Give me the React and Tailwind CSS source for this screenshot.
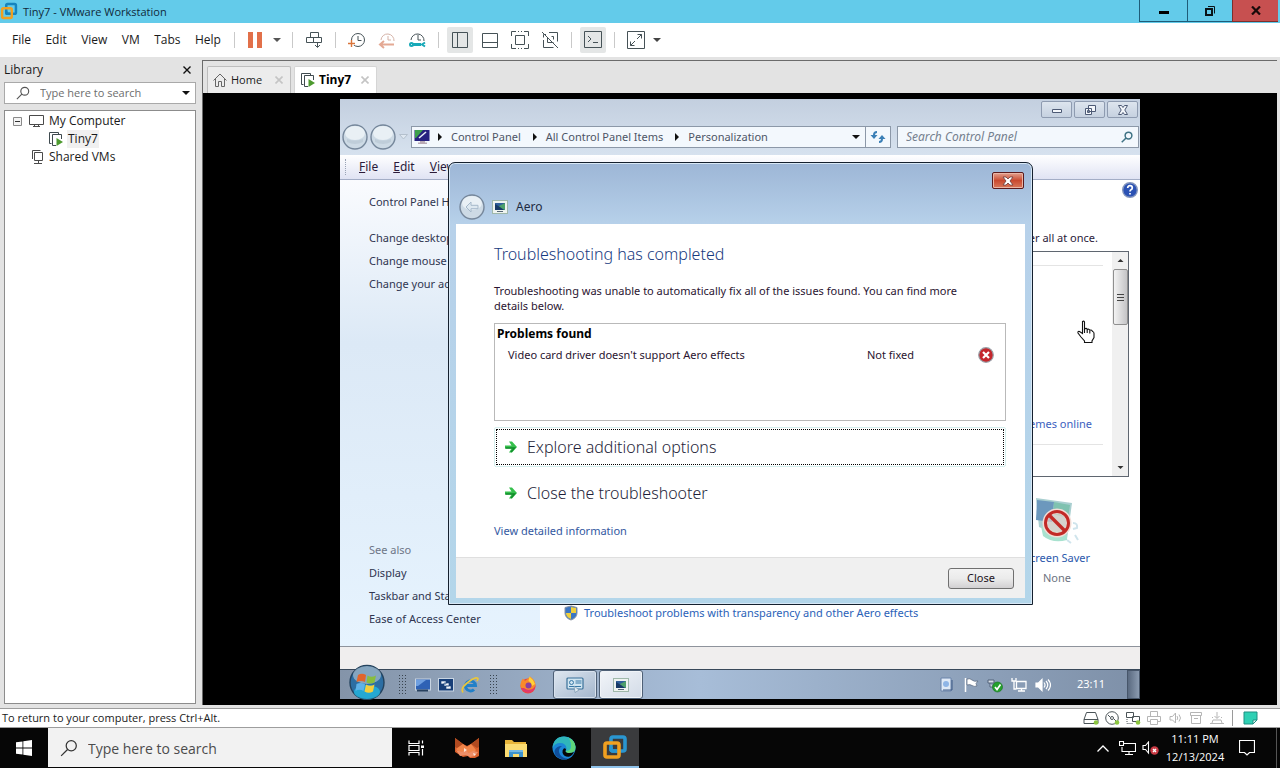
import React, { useState } from 'react';

const HOST_FONT = "font-['Open_Sans','Noto_Sans',sans-serif]";
const GUEST_FONT = "font-['Noto_Sans','Open_Sans',sans-serif]";

/* ---------- shared glyphs ---------- */

function Caret({ className = 'h-[4px] w-[8px]', fill = '#111' }) {
  return (
    <svg viewBox="0 0 8 4" className={className}>
      <path d="M0 0h8L4 4z" fill={fill} />
    </svg>
  );
}

function VmwareLogo({ className, back = '#1684bd', front = '#f0a020' }) {
  return (
    <svg viewBox="0 0 26 26" className={className} fill="none" strokeWidth="3.6">
      <rect x="9" y="3" width="14" height="14" rx="2" stroke={back} />
      <rect x="3" y="9" width="14" height="14" rx="2" stroke={front} />
      <path d="M9 13v2a2 2 0 0 0 2 2h4" stroke={back} />
    </svg>
  );
}

function VmPlayIcon() {
  return (
    <svg viewBox="0 0 16 16" className="h-4 w-4" fill="none" stroke="#3f4a4f">
      <path d="M3.5 12.5h-2v-11h9v2" />
      <path d="M8 14.500h-3.500v-11h9v4.500" />
      <path d="M8.500 7v8l6.500-4z" fill="#4d9a2f" stroke="none" />
    </svg>
  );
}

function MagnifierIcon({ className, stroke = '#555', width = 1.3 }) {
  return (
    <svg viewBox="0 0 16 16" className={className} fill="none" stroke={stroke} strokeWidth={width}>
      <circle cx="10" cy="6" r="4.500" />
      <path d="M6.700 9.300L1 15" />
    </svg>
  );
}

function AeroIcon() {
  return (
    <svg viewBox="0 0 16 14" className="h-[14px] w-4">
      <rect x="0.500" y="0.500" width="15" height="13" fill="#eef4f0" stroke="#9fb8aa" />
      <rect x="3" y="3" width="10" height="7" fill="#2f5f9a" />
      <path d="M13 3L5 7l8 3z" fill="#4da06a" />
      <path d="M3 4l5 3 4 3H3z" fill="#173a66" />
      <rect x="5" y="11" width="6" height="1" fill="#567" />
    </svg>
  );
}

/* ---------- host title bar, menu and toolbar ---------- */

function HostTitleBar() {
  return (
    <header className="flex h-[23px] shrink-0 items-start bg-[#63cbea] pr-[2px]">
      <VmwareLogo className="mt-[2px] h-[18px] w-[18px]" />
      <h1 className="ml-[5px] flex-1 text-[11px] leading-[23px] text-[#10293a]">
        Tiny7 - VMware Workstation
      </h1>
      <button aria-label="Minimize" className="flex h-[22px] w-12 items-center justify-center border-b border-l border-[#1f5c78]">
        <span className="mt-[3px] h-[3px] w-[10px] bg-black" />
      </button>
      <button aria-label="Restore" className="flex h-[22px] w-[45px] items-center justify-center border-b border-l border-[#1f5c78]">
        <svg viewBox="0 0 10 10" className="h-[10px] w-[10px]" fill="none" stroke="#0a1418">
          <rect x="1" y="3" width="6" height="6" strokeWidth="2" />
          <path d="M3 0.500h6.500v7" />
        </svg>
      </button>
      <button aria-label="Close" className="flex h-[22px] w-[46px] items-center justify-center border-b border-l border-[#7c2f2c] bg-[#c75050]">
        <svg viewBox="0 0 10 9" className="h-[9px] w-[10px]" stroke="#1b0a0a" strokeWidth="2.200">
          <path d="M1 0.500l8 8M9 0.500l-8 8" />
        </svg>
      </button>
    </header>
  );
}

const menus = ['File', 'Edit', 'View', 'VM', 'Tabs', 'Help'];

function Divider() {
  return <span className="mx-[6px] h-4 w-px bg-[#c9c9c9]" />;
}

function ToolButton({ label, active, children }) {
  return (
    <button
      aria-label={label}
      className="flex h-[26px] w-[30px] items-center justify-center"
    >
      <span className={`flex h-[26px] w-[26px] items-center justify-center rounded-[2px] ${active ? 'bg-[#e4e6e6]' : ''}`}>
        <svg viewBox="0 0 18 18" className="h-[18px] w-[18px]" fill="none" stroke="#465257">
          {children}
        </svg>
      </span>
    </button>
  );
}

function HostToolbar() {
  return (
    <div className="flex h-[34px] shrink-0 items-center bg-white">
      <nav className="flex w-[228px] shrink-0 justify-between pl-[12px] pr-[7px]">
        {menus.map((m) => (
          <button key={m} className="text-[12px] text-[#1a1a1a]">{m}</button>
        ))}
      </nav>
      <Divider />
      <button aria-label="Suspend" className="flex h-[26px] w-[27px] items-center justify-center gap-[4px]">
        <span className="h-4 w-[5px] bg-[#e2704a]" />
        <span className="h-4 w-[5px] bg-[#e2704a]" />
      </button>
      <button aria-label="Power options" className="flex w-[18px] justify-center"><Caret fill="#555" /></button>
      <Divider />
      <ToolButton label="Send Ctrl+Alt+Del">
        <path d="M5.500 1.500h8v5h-8zM1.500 6.500h7v5h-7zM8.500 6.500h8v5h-8zM12.500 11v5M10 14l2.500 2.500L15 14" />
      </ToolButton>
      <Divider />
      <ToolButton label="Take snapshot">
        <circle cx="10" cy="9" r="6.500" />
        <path d="M10 5v4.500h3.500" />
        <path d="M0 12.500h7M3.500 9v7" stroke="#fff" strokeWidth="3" />
        <path d="M0 12.500h7M3.500 9v7" stroke="#d9743a" strokeWidth="1.400" />
      </ToolButton>
      <ToolButton label="Revert snapshot">
        <path d="M3 9a6.500 6.500 0 1 1 13 1M10 5v4h3" stroke="#d5b3a8" />
        <path d="M2 13.500h14M6 10l-4 3.500L6 17" stroke="#e4a994" strokeWidth="2" />
      </ToolButton>
      <ToolButton label="Manage snapshots">
        <path d="M3 9a6.500 6.500 0 1 1 13 1M10 4v5h3" />
        <path d="M4 13.500h9" stroke="#18a9b8" strokeWidth="3" />
        <circle cx="3.500" cy="13.500" r="1.500" stroke="#18a9b8" strokeWidth="2" />
        <path d="M17 11.500l-3 2 3 2" stroke="#18a9b8" strokeWidth="2" />
      </ToolButton>
      <Divider />
      <ToolButton label="Show library" active>
        <path d="M1.500 1.500h15v15h-15zM6.500 1.500v15" />
      </ToolButton>
      <ToolButton label="Show thumbnail bar">
        <path d="M1.500 2.500h15v14h-15zM1.500 11.500h15" />
      </ToolButton>
      <ToolButton label="Full screen">
        <path d="M4.500 4.500h9v9h-9zM0.500 5V0.500H5M13 0.500h4.500V5M17.500 13v4.500H13M5 17.500H0.500V13M7 0.500h1M10 0.500h1M7 17.500h1M10 17.500h1" />
      </ToolButton>
      <ToolButton label="Unity mode">
        <path d="M5 3.500h-2.500v3M8 1.500h8.500v9M2.500 9v7.500h10M6.500 6.500v5h6M10.500 5.500h2v3M1 1l16 16" />
      </ToolButton>
      <Divider />
      <ToolButton label="Show console view" active>
        <path d="M0.500 0.500h17v16h-17zM4 5l3 3-3 3M9 11.500h5" />
      </ToolButton>
      <Divider />
      <ToolButton label="Stretch guest">
        <path d="M0.500 0.500h17v17h-17zM10 8l4.500-4.500M10.500 3.500h4v4M8 10l-4.500 4.500M3.500 10.500v4h4" />
      </ToolButton>
      <button aria-label="Stretch options" className="ml-[2px]"><Caret fill="#444" /></button>
    </div>
  );
}

/* ---------- library panel ---------- */

function Library() {
  const [query, setQuery] = useState('');

  return (
    <aside className="flex w-[202px] shrink-0 flex-col pl-1 pr-[6px] pt-px">
      <div className="flex h-6 items-center justify-between pr-[5px]">
        <h2 className="text-[12px] text-[#1a1a1a]">Library</h2>
        <button aria-label="Close library">
          <svg viewBox="0 0 8 8" className="h-2 w-2" stroke="#111" strokeWidth="1.400">
            <path d="M0.500 0.500l7 7M7.500 0.500l-7 7" />
          </svg>
        </button>
      </div>
      <div className="flex h-[22px] items-center border border-[#a9a9a9] bg-white pl-[11px] pr-[5px]">
        <MagnifierIcon className="h-[14px] w-[14px] shrink-0" />
        <input
          aria-label="Library search"
          value={query}
          onChange={(e) => setQuery(e.target.value)}
          placeholder="Type here to search"
          className="ml-[10px] min-w-0 flex-1 bg-transparent text-[11px] outline-none placeholder:text-[#6d6d6d]"
        />
        <button aria-label="Search options"><Caret /></button>
      </div>
      <ul className="mt-[6px] mb-px flex-1 border border-[#8c8c8c] bg-white pt-px text-[12px] leading-[18px] text-[#1a1a1a]">
        <li>
          <button className="flex items-center pl-[8px]">
            <svg viewBox="0 0 9 9" className="h-[9px] w-[9px]" fill="#f4f4f4" stroke="#8a8a8a">
              <path d="M0.500 0.500h8v8h-8z" />
              <path d="M2 4.500h5" stroke="#333" />
            </svg>
            <svg viewBox="0 0 15 12" className="ml-[7px] mr-[5px] h-3 w-[15px]" fill="none" stroke="#4a4a4a">
              <path d="M0.500 0.500h14v9h-14zM4 11.500h7M5.500 9.500v2M9.500 9.500v2" />
            </svg>
            My Computer
          </button>
          <ul>
            <li>
              <button className="flex items-center pl-[43px]">
                <VmPlayIcon />
                <span className="ml-[3px] bg-[#f0f0f0] px-px">Tiny7</span>
              </button>
            </li>
          </ul>
        </li>
        <li>
          <button className="flex items-center pl-[26px]">
            <svg viewBox="0 0 12 14" className="mr-[6px] h-[14px] w-3" fill="none" stroke="#4a4a4a">
              <path d="M3.500 2.500h8v8h-8zM1.500 9v-8.500h8M7.500 10.500v3M3 13.500h8" />
            </svg>
            Shared VMs
          </button>
        </li>
      </ul>
    </aside>
  );
}

/* ---------- tabs ---------- */

function TabClose() {
  return (
    <svg viewBox="0 0 8 8" className="h-2 w-2" stroke="#c4c4c4" strokeWidth="1.600">
      <path d="M0.500 0.500l7 7M7.500 0.500l-7 7" />
    </svg>
  );
}

function Tabs() {
  return (
    <div className="flex h-8 shrink-0 items-end gap-[3px] pl-1">
      <button className="flex h-[27px] w-[84px] items-center rounded-t-[2px] border border-b-0 border-[#bdbdbd] bg-[#ececec] pl-[5px] pr-[7px] text-[11px] text-[#1a1a1a]">
        <svg viewBox="0 0 14 14" className="mr-[4px] h-[14px] w-[14px]" fill="none" stroke="#666">
          <path d="M0.500 7.500L7 1l6.500 6.500M2.500 6v7.500h3v-5h3v5h3V6" />
        </svg>
        <span className="flex-1 text-left">Home</span>
        <TabClose />
      </button>
      <button className="flex h-[27px] w-[83px] items-center rounded-t-[2px] border border-b-0 border-[#d5d5d5] bg-white pl-[5px] pr-[7px] text-[12px] font-bold text-black">
        <VmPlayIcon />
        <span className="ml-[3px] flex-1 text-left">Tiny7</span>
        <TabClose />
      </button>
    </div>
  );
}

/* ---------- guest: control panel window ---------- */

function CaptionButton({ label, children }) {
  return (
    <button
      aria-label={label}
      className="flex h-[17px] w-[31px] items-center justify-center rounded-[2px] border border-[#8e9bb0] bg-linear-to-b from-[#dde5ee] to-[#c6d1e0]"
    >
      <svg viewBox="0 0 14 12" className="h-3 w-[14px]" fill="#f4f7fb" stroke="#4d5a75">{children}</svg>
    </button>
  );
}

function NavOrb({ arrow }) {
  return (
    <svg viewBox="0 0 26 26" className="h-[26px] w-[26px]">
      <circle cx="13" cy="13" r="12" fill="#cddae5" stroke="#76879b" strokeWidth="1.400" />
      <ellipse cx="13" cy="9" rx="10" ry="7" fill="#e9f0f5" />
      {arrow && <path d="M12 8l-5 5 5 5v-3.300h7v-3.400h-7z" fill="#dde8f0" stroke="#a5b8ca" />}
      {!arrow && <path d="M5 15q8 3 16 0v3q-8 4-16 0z" fill="#bfcdd9" />}
    </svg>
  );
}

function Crumb({ children }) {
  return (
    <>
      <svg viewBox="0 0 4 8" className="h-2 w-1 shrink-0"><path d="M0 0l4 4-4 4z" fill="#111" /></svg>
      <button className="ml-[9px] mr-[12px] whitespace-nowrap">{children}</button>
    </>
  );
}

function AddressRow() {
  const [search, setSearch] = useState('');

  return (
    <div className="flex h-9 items-center pl-[2px] pr-px text-[#4d5566]">
      <NavOrb />
      <span className="ml-[2px]"><NavOrb /></span>
      <button aria-label="Recent pages" className="ml-[3px] w-3">
        <svg viewBox="0 0 9 6" className="h-[6px] w-[9px]" fill="#dfe8f1" stroke="#b4c0cd">
          <path d="M0.500 0.500h8l-4 4.500z" />
        </svg>
      </button>
      <div className="flex h-[22px] flex-1 items-center border border-[#8c98a8] bg-[#f3f8fd]">
        <svg viewBox="0 0 16 16" className="ml-[2px] mr-[8px] h-4 w-4 shrink-0">
          <rect x="0.500" y="1" width="15" height="11" fill="#27217f" />
          <path d="M1 1h8L2 9H1z" fill="#3da04b" />
          <path d="M5 9l7-6" stroke="#e9eef8" strokeWidth="1.600" />
          <path d="M6 12h5v1.500h2V15H4v-1.500h2z" fill="#b9a9b4" />
        </svg>
        <Crumb>Control Panel</Crumb>
        <Crumb>All Control Panel Items</Crumb>
        <Crumb>Personalization</Crumb>
        <button aria-label="Previous locations" className="ml-auto mr-[5px]"><Caret /></button>
        <button aria-label="Refresh" className="flex h-full w-[25px] items-center justify-center border-l border-[#8c98a8]">
          <svg viewBox="0 0 16 14" className="h-[14px] w-4" fill="#3b7fb6">
            <path d="M7 1Q3 1 3 5H0.500L4 9l3.500-4H5q0-2 2-2zM9 13q4 0 4-4h2.500L12 5 8.500 9H11q0 2-2 2z" />
          </svg>
        </button>
      </div>
      <div className="ml-[6px] flex h-[22px] w-[242px] items-center border border-[#8c98a8] bg-[#f3f8fd] pl-2 pr-[5px]">
        <input
          aria-label="Control Panel search"
          value={search}
          onChange={(e) => setSearch(e.target.value)}
          placeholder="Search Control Panel"
          className="min-w-0 flex-1 bg-transparent text-[12px] italic outline-none placeholder:text-[#75808f]"
        />
        <MagnifierIcon className="h-3 w-3" stroke="#3f7385" width={2} />
      </div>
    </div>
  );
}

function MenuItem({ first, rest }) {
  return (
    <button className="text-[12px] text-[#2b1b3a]"><span className="underline">{first}</span>{rest}</button>
  );
}

const tasks = ['Change desktop', 'Change mouse', 'Change your account'];
const related = ['Display', 'Taskbar and Start', 'Ease of Access Center'];

function TaskPane() {
  return (
    <aside className="flex w-[200px] shrink-0 flex-col bg-linear-to-b from-[#fafbfe] via-[#dce9f6] via-35% to-[#e6f3fe] pl-[29px] pt-[10px] pb-4 leading-[23px] text-[#2f3550]">
      <a href="#home" className="whitespace-nowrap">Control Panel Home</a>
      <ul className="mt-[13px]">
        {tasks.map((t) => (
          <li key={t} className="whitespace-nowrap"><a href="#task">{t}</a></li>
        ))}
      </ul>
      <p className="mt-auto text-[#6e7687]">See also</p>
      <ul>
        {related.map((t) => (
          <li key={t} className="whitespace-nowrap"><a href="#related">{t}</a></li>
        ))}
      </ul>
    </aside>
  );
}

function ThemeList() {
  return (
    <div className="ml-[29px] mr-[11px] mt-[5px] flex h-[226px] border border-[#5f6670]">
      <div className="flex flex-1 flex-col pt-[13px] pr-[9px]">
        <hr className="border-[#e4e4e4]" />
        <a href="#themes" className="mt-[149px] pr-[11px] text-right leading-[18px] text-[#3c5fc0]">Get more themes online</a>
        <hr className="mt-[11px] border-[#e4e4e4]" />
      </div>
      <div className="flex w-[16px] flex-col items-center bg-[#f0f0f0]">
        <button aria-label="Scroll up" className="flex h-[17px] items-center"><Caret className="h-[3px] w-[7px] rotate-180" fill="#333" /></button>
        <button aria-label="Scroll thumb" className="flex h-[56px] w-[15px] flex-col items-center justify-center gap-[2px] rounded-[2px] border border-[#8f8f8f] bg-linear-to-r from-[#f3f3f3] to-[#c4c4c6]">
          <span className="h-px w-[7px] bg-[#444]" />
          <span className="h-px w-[7px] bg-[#444]" />
          <span className="h-px w-[7px] bg-[#444]" />
        </button>
        <button aria-label="Scroll down" className="mt-auto flex h-[17px] items-center"><Caret className="h-[3px] w-[7px]" fill="#333" /></button>
      </div>
    </div>
  );
}

function ScreenSaverIcon() {
  return (
    <svg viewBox="0 0 48 48" className="h-12 w-12">
      <path d="M3 1l36 5-5 36-28-12z" fill="#a9cfd0" />
      <path d="M4 3l17 2-2 20-16-2z" fill="#6c98bd" />
      <path d="M21 5l16 3-2 13-15-4z" fill="#7fc2b0" />
      <path d="M8 29l26 9v5q-14 4-24-4z" fill="#a8e2cf" />
      <path d="M40 26q5 0 4 5l-4 1M34 43l4 3M42 38l3 5" stroke="#cfe4ec" strokeWidth="2" fill="none" />
      <circle cx="24" cy="26" r="12" fill="#f3d5cb" fillOpacity="0.600" stroke="#f2ddd6" strokeWidth="5" />
      <circle cx="24" cy="26" r="11.500" fill="none" stroke="#c22a26" strokeWidth="3" />
      <path d="M16 18l16 16" stroke="#c22a26" strokeWidth="3.400" />
    </svg>
  );
}

function ControlPanel() {
  return (
    <section className="flex min-h-0 flex-1 flex-col bg-linear-to-b from-[#c3cfdf] via-[#dbe6f2] via-[12%] to-[#dbe6f2] text-[11px]">
      <div className="flex h-5 shrink-0 justify-end gap-[2px] pr-[2px] pt-[2px]">
        <CaptionButton label="Minimize window"><path d="M2.500 5.500h9v3h-9z" /></CaptionButton>
        <CaptionButton label="Restore window"><path d="M5.500 1.500h7v6h-7zM2.500 4.500h6v6h-6zM4.500 6.500h2v2h-2z" /></CaptionButton>
        <CaptionButton label="Close window">
          <path d="M2.500 1.500h3L7 3.500l1.500-2h3L8.800 6l2.700 4.500h-3L7 8.500l-1.500 2h-3L5.200 6z" />
        </CaptionButton>
      </div>
      <AddressRow />
      <nav className="flex h-[25px] shrink-0 items-center gap-[15px] border-b border-[#a3adc6] bg-linear-to-b from-white to-[#e0e3f3] pl-[5px]">
        <span className="-mr-1 h-4 w-[3px] border-l border-dotted border-[#9aa3b5]" />
        <MenuItem first="F" rest="ile" />
        <MenuItem first="E" rest="dit" />
        <MenuItem first="V" rest="iew" />
      </nav>
      <div className="flex min-h-0 flex-1 bg-white">
        <TaskPane />
        <main className="flex min-w-0 flex-1 flex-col">
          <button aria-label="Help" className="mr-[2px] mt-[2px] self-end">
            <svg viewBox="0 0 16 16" className="h-4 w-4">
              <circle cx="8" cy="8" r="7.300" fill="#2b52b4" stroke="#8395bd" strokeWidth="1.400" />
              <path d="M5.700 6q0-2.300 2.300-2.300T10.300 6q0 1.200-1.300 1.800-1 .5-1 1.700M8 11v1.600" stroke="#fff" strokeWidth="1.700" fill="none" />
            </svg>
          </button>
          <p className="mr-[42px] mt-8 text-right leading-4 text-[#2b1b3a]">and screen saver all at once.</p>
          <ThemeList />
          <div className="mr-[26px] mt-5 flex w-[114px] flex-col items-center self-end leading-5">
            <ScreenSaverIcon />
            <a href="#saver" className="mt-[3px] text-[#2b58ac]">Screen Saver</a>
            <span className="text-[#6d7380]">None</span>
          </div>
          <a href="#aero" className="ml-6 mt-[15px] flex items-center gap-[6px] leading-5 text-[#2b62b8]">
            <svg viewBox="0 0 14 16" className="h-4 w-[14px]">
              <path d="M7 1l6 1.500V8q0 5-6 7-6-2-6-7V2.500z" fill="#3b76c4" stroke="#8a94a3" />
              <path d="M7 2v6h5V3zM7 8H2q0 4 5 6z" fill="#f0cf3c" />
            </svg>
            Troubleshoot problems with transparency and other Aero effects
          </a>
        </main>
      </div>
      <footer className="h-[23px] shrink-0 border-t border-[#8e939c] bg-[#f0eeee]" />
    </section>
  );
}

/* ---------- guest: troubleshooter dialog ---------- */

function GreenArrow() {
  return (
    <svg viewBox="0 0 14 14" className="h-[14px] w-[14px] shrink-0">
      <path d="M1 5.500h6.500L5 1.500h3l5 5.500-5 5.500H5l2.500-4H1z" fill="#35c04c" />
      <path d="M1.500 8h9L7 12" stroke="#128a2b" strokeWidth="1.400" fill="none" />
    </svg>
  );
}

function Troubleshooter() {
  return (
    <div
      role="dialog"
      aria-label="Aero"
      className="absolute left-[108px] right-[107px] top-[63px] flex h-[443px] flex-col rounded-t-[7px] border border-[#15202e] bg-linear-to-b from-[#9db6d6] via-[#b7d1ea] via-[14%] to-[#b3d6ea] px-[7px] pb-[6px] text-[11px] shadow-[inset_0_0_0_1px_#d8e8f6]"
    >
      <div className="flex h-[26px] shrink-0 justify-end pt-[9px] pr-px">
        <button aria-label="Close dialog" className="flex h-[17px] w-[32px] items-center justify-center rounded-[2px] border border-[#5b1a1c] bg-linear-to-b from-[#e2a08f] via-[#c9492f] via-50% to-[#d9775a] shadow-[inset_0_0_0_1px_#eab5a5]">
          <svg viewBox="0 0 12 10" className="h-[10px] w-3" fill="#fff" stroke="#6b3a3a" strokeWidth="0.800">
            <path d="M1 1h3l2 2 2-2h3L8 5l3 4H8L6 7 4 9H1l3-4z" />
          </svg>
        </button>
      </div>
      <div className="flex h-[35px] shrink-0 items-center pl-[3px] text-[12px] text-[#1e2b42]">
        <NavOrb arrow />
        <span className="ml-[7px] mr-[8px]"><AeroIcon /></span>
        Aero
      </div>
      <div className="flex min-h-0 flex-1 flex-col bg-white">
        <div className="flex flex-1 flex-col pl-[38px] pr-[19px] pt-[18px]">
          <h2 className="text-[16px] font-light leading-6 text-[#173a80]">Troubleshooting has completed</h2>
          <p className="mr-6 mt-[17px] leading-[15px] text-[#2a1430]">
            Troubleshooting was unable to automatically fix all of the issues found. You can find more details below.
          </p>
          <div className="mt-[10px] h-[98px] border border-[#b9b9b9]">
            <table className="w-full text-left text-[#2a1430]">
              <thead>
                <tr><th colSpan="3" className="pl-[2px] text-[12px] leading-[19px] text-black">Problems found</th></tr>
              </thead>
              <tbody>
                <tr className="leading-6">
                  <td className="pl-[13px]">Video card driver doesn't support Aero effects</td>
                  <td className="w-[111px]">Not fixed</td>
                  <td className="w-[27px]">
                    <svg viewBox="0 0 16 16" className="h-4 w-4">
                      <circle cx="8" cy="8" r="7.300" fill="#c4262c" stroke="#9aa0a8" strokeWidth="1.200" />
                      <path d="M5 5l6 6M11 5l-6 6" stroke="#fff" strokeWidth="2.200" />
                    </svg>
                  </td>
                </tr>
              </tbody>
            </table>
          </div>
          <div className="mt-[6px] rounded-[2px] border border-[#d5efee] p-px">
            <button className="flex h-[36px] w-full items-center gap-[9px] border border-dotted border-black pl-[7px] text-[16px] font-light text-[#1f1f3a]">
              <GreenArrow />
              Explore additional options
            </button>
          </div>
          <button className="mt-[8px] flex h-[36px] items-center gap-[9px] pl-[10px] text-[16px] font-light text-[#1f1f3a]">
            <GreenArrow />
            Close the troubleshooter
          </button>
          <a href="#details" className="mt-[10px] leading-5 text-[#33589f]">View detailed information</a>
        </div>
        <div className="flex h-[41px] shrink-0 items-center justify-end border-t border-[#dfdfdf] bg-[#f0f0f0] pr-[11px]">
          <button className="h-[21px] w-[66px] rounded-[3px] border border-[#707070] bg-linear-to-b from-[#f3f3f3] via-[#ebebeb] to-[#d2d0d2] leading-[18px] text-[#1c1220]">
            Close
          </button>
        </div>
      </div>
    </div>
  );
}

/* ---------- guest taskbar ---------- */

function Grip() {
  return (
    <svg viewBox="0 0 10 22" className="h-[22px] w-[10px] shrink-0" stroke="#39444f" strokeWidth="1" strokeDasharray="1 2">
      <path d="M1.500 1v21M4.500 1v21M7.500 1v21" />
    </svg>
  );
}

function GuestTaskbar() {
  return (
    <div className="flex h-[30px] shrink-0 items-center border-t border-[#39485a] bg-linear-to-r from-[#8494a9] via-[#a7bdd8] via-45% to-[#7e90a8]">
      <button aria-label="Start" className="relative -top-[3px] ml-2">
        <svg viewBox="0 0 38 36" className="h-9 w-[38px]">
          <circle cx="19" cy="18.500" r="17" fill="#2c6ea3" stroke="#24435e" strokeWidth="1.400" />
          <ellipse cx="19" cy="11" rx="14" ry="9" fill="#a9bccb" fillOpacity="0.700" />
          <ellipse cx="19" cy="28" rx="13" ry="7" fill="#24b6de" fillOpacity="0.800" />
          <path d="M10 11q4-2.500 8 0l-1 7q-4-2-8.500 0z" fill="#e0652c" />
          <path d="M19.500 11.500q4 2.500 8.500 0l-1.500 7q-4 2-8 0z" fill="#88bd3e" />
          <path d="M8.500 20q4-2 8.500 0l-1.500 7q-4-2.500-8 0z" fill="#5fb2e8" />
          <path d="M18 20.500q4 2.500 8.500 0l-1.500 7q-4 2.500-8.500 0z" fill="#f4ce3d" />
        </svg>
      </button>
      <div className="ml-3 mr-[7px]"><Grip /></div>
      <button aria-label="Show desktop" className="mr-[7px]">
        <svg viewBox="0 0 16 14" className="h-[14px] w-4">
          <rect x="0.500" y="1" width="15" height="11" fill="#2e62b5" stroke="#c7d4e2" />
          <path d="M1 2h10L3 8H1z" fill="#6e9fe0" />
          <path d="M2 12.500h11" stroke="#27405e" strokeWidth="2" />
        </svg>
      </button>
      <button aria-label="Switch windows" className="mr-[7px]">
        <svg viewBox="0 0 16 14" className="h-[14px] w-4">
          <rect x="0.500" y="0.500" width="15" height="12.500" fill="#183f78" stroke="#c7d4e2" />
          <path d="M3 3h5v3H3zM6 5h5v3H6zM8 8h5v3H8z" fill="#f0f5fa" stroke="#183f78" strokeWidth="0.600" />
        </svg>
      </button>
      <button aria-label="Internet Explorer">
        <svg viewBox="0 0 18 18" className="h-[18px] w-[18px]" fill="none">
          <path d="M4.500 9.500h10a5 5 0 1 0-1.500 4" stroke="#2280c8" strokeWidth="3" />
          <path d="M2 16.500Q-1 12 8 5.500 15 0.500 17 2.500q0 1-1 2.500" stroke="#e9c63c" strokeWidth="1.700" />
        </svg>
      </button>
      <div className="ml-[10px] mr-[20px]"><Grip /></div>
      <button aria-label="Firefox">
        <svg viewBox="0 0 18 18" className="h-[18px] w-[18px]">
          <circle cx="9" cy="10" r="7.500" fill="#ee4a3c" />
          <path d="M1.500 10Q1.500 5 4 2.500L6 5q4-3.500 5-4.500 5 3 5.500 8-1 6-6 7-7 1-9-5.500z" fill="#f98a2b" />
          <path d="M2 12q3 5.500 9 4.500 5-1.500 5.500-7-2 4-5.500 4-3 1-6-1.500z" fill="#e03a6a" />
          <circle cx="9.500" cy="9.500" r="3" fill="#8a3fa0" />
          <path d="M10.500 0.500Q14 3 16 8l-3 2q0-3-3.500-5z" fill="#ffd23a" />
        </svg>
      </button>
      <button aria-label="Personalization" className="ml-4 flex h-[29px] w-11 items-center justify-center rounded-[3px] border border-[#4e6076] bg-linear-to-br from-[#dfe7f0] to-[#a3b6cd] shadow-[inset_0_0_0_1px_#d8e2ee]">
        <svg viewBox="0 0 18 16" className="h-4 w-[18px]">
          <rect x="1" y="1" width="16" height="11" rx="1" fill="#cfe4f0" stroke="#3a7199" strokeWidth="1.200" />
          <circle cx="5.500" cy="5.500" r="2" fill="none" stroke="#3879a6" />
          <path d="M9.500 4h6M9.500 6h6M3 9.500h12" stroke="#3879a6" />
          <path d="M8 9l5 4-4 2.500z" fill="#dfe9f0" stroke="#6a8ba6" strokeWidth="0.600" />
        </svg>
      </button>
      <button aria-label="Aero troubleshooter" className="ml-[2px] flex h-[29px] w-11 items-center justify-center rounded-[3px] border border-[#4e6076] bg-linear-to-br from-[#f2f5f9] to-[#d2dbe7] shadow-[inset_0_0_0_1px_#f0f4f8]">
        <AeroIcon />
      </button>
      <div className="ml-auto flex items-center gap-2">
        <svg viewBox="0 0 16 16" className="h-4 w-4">
          <path d="M2 1h10v13H2z" fill="#dfe9f6" stroke="#6a84aa" />
          <path d="M4 13h9V3" stroke="#3e5b86" fill="none" />
          <circle cx="7" cy="7" r="3" fill="#8fb5e6" />
        </svg>
        <svg viewBox="0 0 16 16" className="h-4 w-4">
          <path d="M2.500 1v14" stroke="#fff" strokeWidth="1.500" />
          <path d="M4 2q3-1 5 1t6 1l-2 2.500 1 2.500q-3 1-5-.5T4 8z" fill="#fff" stroke="#53637a" strokeWidth="0.700" />
        </svg>
        <svg viewBox="0 0 16 16" className="h-4 w-4">
          <path d="M1 3h6v3H1zM3 6v4h3" fill="#d7dde5" stroke="#53637a" />
          <circle cx="10.500" cy="10" r="5" fill="#25a12c" stroke="#187020" strokeWidth="0.600" />
          <path d="M8 10l2 2.500 3.500-5" stroke="#fff" strokeWidth="1.700" fill="none" />
        </svg>
        <svg viewBox="0 0 16 16" className="h-4 w-4" fill="none" stroke="#fff" strokeWidth="1.300">
          <path d="M5.500 4.500h9.500v7H5.500zM7 14h7M10.500 11.500V14M1 1v3h4V1M3 4v8h2.500" />
        </svg>
        <svg viewBox="0 0 16 16" className="h-4 w-4" fill="none" stroke="#fff" strokeWidth="1.200">
          <path d="M1 6h2.500L7 2.500v11L3.500 10H1z" fill="#fff" />
          <path d="M9 5.500q2 2.500 0 5M11 4q3.500 4 0 8M13 2.500q5 5.500 0 11" />
        </svg>
        <time className="ml-[18px] mr-[22px] text-[11px] text-white">23:11</time>
      </div>
      <button aria-label="Peek at desktop" className="h-[29px] w-[13px] border border-[#47566a] bg-linear-to-r from-[#5a6a80] to-[#8b9bb0]" />
    </div>
  );
}

/* hand pointer resting over the theme list */
function HandPointer() {
  return (
    <svg viewBox="0 0 18 24" className="absolute right-[45px] top-[221px] h-6 w-[18px]" fill="#fff" stroke="#111" strokeWidth="1.100">
      <path d="M5.500 1.500q1.500-1 2 .5v7q2-1.500 2.700.5 1.800-1 2.600.7 2.200-.7 2.700 1.300 1.500 0 1.500 2v4l-2 3.500v1.500H7.500v-1.500L4 17l-3-4q-.5-2 1.500-1.500l3 2z" />
      <path d="M7.500 9v4M10.200 10v3M12.800 10.500v3" />
    </svg>
  );
}

function GuestScreen() {
  return (
    <div className={`flex min-h-0 flex-1 justify-center bg-black py-[6px] ${GUEST_FONT}`}>
      <div className="relative flex w-full max-w-[800px] flex-col">
        <ControlPanel />
        <GuestTaskbar />
        <Troubleshooter />
        <HandPointer />
      </div>
    </div>
  );
}

/* ---------- host status bar and taskbar ---------- */

function StatusIcon({ dim, dot, children }) {
  return (
    <svg viewBox="0 0 16 14" className="h-[14px] w-4" fill="none" stroke={dim ? '#b5b5b5' : '#4a5357'}>
      {children}
      {dot && <circle cx="13" cy="11.500" r="2.300" fill="#8cc63f" stroke="none" />}
    </svg>
  );
}

function StatusBar() {
  return (
    <footer className="mt-[3px] flex h-5 shrink-0 items-center justify-between border-y border-[#9d9d9d] bg-white pl-[2px] pr-[22px]">
      <span className="text-[11px] text-[#1a1a1a]">To return to your computer, press Ctrl+Alt.</span>
      <div className="flex items-center gap-[5px]">
        <StatusIcon dot><path d="M3.500 1.500h9l2.500 7v4H1v-4zM1 8.500h14" /></StatusIcon>
        <StatusIcon dot><circle cx="8" cy="7" r="6.300" /><circle cx="8" cy="7" r="1.500" /><path d="M4 4l2 2M10 8l2 2" /></StatusIcon>
        <StatusIcon dot><path d="M1.500 1.500h7v5h-7zM7.500 5.500h7v5h-7z" /><path d="M2 8v4.500h6" strokeDasharray="1 1" /></StatusIcon>
        <StatusIcon dim><path d="M4.500 5V0.500h7V5M4 10.500H1.500v-5h13v5H12M4.500 8.500h7v5h-7z" /></StatusIcon>
        <StatusIcon dim><path d="M3 5.500h2.500L8.500 2v10L5.500 9H3zM10 5q1.500 2 0 4M12 3.500q3 3.500 0 7" /></StatusIcon>
        <StatusIcon dim><path d="M2.500 1.500h11v3h-11zM3.500 4.500v8h9v-8M6 7.500h4" /></StatusIcon>
        <StatusIcon dim><path d="M1 12.500h14M3 12l1-3h8l1 3M8 1v6M5.500 5L8 7.500 10.500 5M3 6l1 1M13 6l-1 1" /></StatusIcon>
        <span className="mx-[2px] h-4 w-px bg-[#9a9a9a]" />
        <svg viewBox="0 0 15 14" className="ml-[3px] h-[14px] w-[15px]">
          <path d="M1 1h13v8l-4 4H1z" fill="#2fd0b4" stroke="#1f8f82" />
          <path d="M10 13V9h4z" fill="#e5f7f3" stroke="#1f8f82" />
        </svg>
      </div>
    </footer>
  );
}

function HostTaskbar() {
  const [query, setQuery] = useState('');

  return (
    <div className="flex h-10 shrink-0 items-stretch bg-[#060606] text-white">
      <button aria-label="Windows" className="flex w-12 items-center justify-center">
        <svg viewBox="0 0 16 16" className="h-4 w-4" fill="#fff">
          <path d="M0 2.300L6.500 1.400v6.200H0zM7.300 1.300L16 0v7.600H7.300zM0 8.400h6.500v6.200L0 13.700zM7.300 8.400H16V16l-8.700-1.300z" />
        </svg>
      </button>
      <div className="mb-px flex w-[344px] items-center bg-[#f2f2f2] pl-3 pt-px">
        <MagnifierIcon className="h-[18px] w-[18px]" stroke="#333" width={1.100} />
        <input
          aria-label="Windows search"
          value={query}
          onChange={(e) => setQuery(e.target.value)}
          placeholder="Type here to search"
          className="ml-[10px] min-w-0 flex-1 bg-transparent text-[14px] text-black outline-none placeholder:text-[#4c4c4c]"
        />
      </div>
      <button aria-label="Task view" className="flex w-12 items-center justify-center">
        <svg viewBox="0 0 16 16" className="h-4 w-4" fill="none" stroke="#fff" strokeWidth="1.200">
          <path d="M1 0.500v3h10v-3M1 5.500h10v5H1zM1 15.500v-3h10v3M14.500 0.500v3M14.500 9v6.500" />
          <path d="M13 5.500h3v2.500h-3z" fill="#fff" stroke="none" />
        </svg>
      </button>
      <button aria-label="Fox" className="flex w-[54px] items-center justify-center">
        <svg viewBox="0 0 24 22" className="h-[22px] w-6">
          <path d="M0 1l8 6 4 2 4-2 8-6v18l-4 2h-5l-2-2-5 1-8-5z" fill="#d9602c" />
          <path d="M0 1l8 6-6 4-2-1zM24 1l-8 6 6 4 2-1z" fill="#b04a20" />
          <path d="M8 7l4 3 4-3 5 6-4 5-5-3-6 1-5-4z" fill="#f1854a" />
          <path d="M1 13l6 2 3-2 4 3 4-2 5 1-3 4-5 1-4-2-6 1z" fill="#ee8f68" />
          <path d="M9 11l3 2-3 2zM18 16l3 1-2 2z" fill="#fbe3d6" />
        </svg>
      </button>
      <button aria-label="File Explorer" className="flex w-[43px] items-center justify-center">
        <svg viewBox="0 0 22 19" className="h-[19px] w-[22px]">
          <path d="M0 1h7l2 2h12v15H0z" fill="#e8b53a" />
          <path d="M0 5h22v13H0z" fill="#fbdc72" />
          <path d="M4 18v-7h14v7h-4v-3H8v3z" fill="#3d93cf" />
          <path d="M4 11h14v2H4z" fill="#73b9e6" />
        </svg>
      </button>
      <button aria-label="Edge" className="flex w-[54px] items-center justify-center">
        <svg viewBox="0 0 24 24" className="h-6 w-6">
          <circle cx="12" cy="12" r="11.500" fill="#1b86d6" />
          <path d="M0.500 12Q2 0.500 12 0.500T23.500 11q0 6-6 6-4 0-4-2 1-1 1-2.500Q14 7 8 7 3 7 0.500 12z" fill="#2fb6bb" />
          <path d="M17 2q6.500 3.300 6.500 9 0 6-6 6-4 0-4-2 5 0 5.500-4T17 2z" fill="#5fd67a" />
          <path d="M10 10Q5 13.500 8 18.500q3 4.500 8.500 4-3 1.300-6 .9Q2 21 2.500 15 4 10 10 10z" fill="#0f4f9c" />
          <path d="M13.500 15q0 2 4 2 2.500 0 4.500-1.200-1.500 4-5 5-5 .5-6.500-4-.5-3 1.500-4.500 3 0 1.500 2.700z" fill="#060606" />
        </svg>
      </button>
      <button aria-label="VMware Workstation" className="flex w-12 items-center justify-center border-b-2 border-[#8fc3ea] bg-[#3a3b3d]">
        <VmwareLogo className="h-[26px] w-[26px]" back="#2a96d0" />
      </button>
      <div className="ml-auto flex items-center pr-[3px]">
        <button aria-label="Hidden icons">
          <svg viewBox="0 0 12 7" className="h-[7px] w-3" fill="none" stroke="#fff" strokeWidth="1.300"><path d="M0.500 6.500L6 1l5.500 5.500" /></svg>
        </button>
        <svg viewBox="0 0 17 14" className="ml-[10px] h-[14px] w-[17px]" fill="none" stroke="#fff" strokeWidth="1.100">
          <path d="M5 2.500h11.500v8H3V6M0.500 0.500h4v4h-4zM6 13.500h8M10 10.500v3" />
        </svg>
        <svg viewBox="0 0 17 14" className="ml-[6px] h-[14px] w-[17px]" fill="none" stroke="#fff" strokeWidth="1.100">
          <path d="M1 4.500h2.500L6.500 1v11L3.500 8.500H1z" />
          <circle cx="12.500" cy="9.500" r="4.200" fill="#c93a44" stroke="none" />
          <path d="M11 8l3 3M14 8l-3 3" strokeWidth="1.400" />
        </svg>
        <div className="ml-[6px] w-[60px] whitespace-nowrap text-center text-[11px] leading-[18px]">
          <p>11:11 PM</p>
          <p>12/13/2024</p>
        </div>
        <button aria-label="Notifications" className="ml-[14px] mr-[21px]">
          <svg viewBox="0 0 16 16" className="h-4 w-4" fill="none" stroke="#fff" strokeWidth="1.200">
            <path d="M0.500 0.500h15v12h-5L8 15l-2.500-2.500h-5z" />
          </svg>
        </button>
        <span className="h-10 w-px bg-[#555]" />
      </div>
    </div>
  );
}

function App() {
  return (
    <div className={`flex h-screen flex-col overflow-hidden bg-[#e3e3e3] ${HOST_FONT}`}>
      <HostTitleBar />
      <HostToolbar />
      <div className="flex min-h-0 flex-1 pr-[3px]">
        <Library />
        <div className="mt-[3px] flex min-w-0 flex-1 flex-col border-l border-t border-[#6b6b6b]">
          <Tabs />
          <GuestScreen />
        </div>
      </div>
      <StatusBar />
      <HostTaskbar />
    </div>
  );
}

export default App;
